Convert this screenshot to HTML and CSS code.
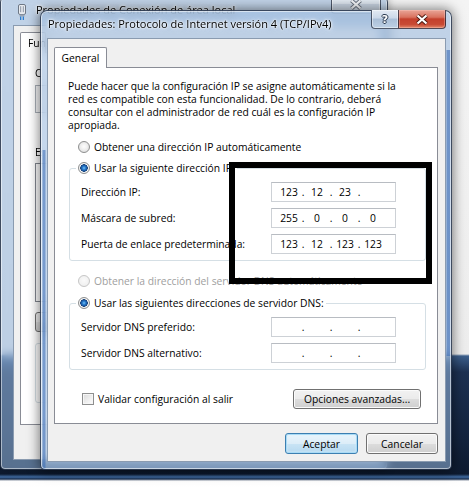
FILE: index.html
```html
<!DOCTYPE html>
<html lang="es">
<head>
<meta charset="utf-8">
<title>Propiedades: Protocolo de Internet versión 4 (TCP/IPv4)</title>
<link rel="stylesheet" href="styles.css">
</head>
<body>
<div class="desktop">

  <div class="win win-back">
    <div class="titlebar">
      <svg class="app-icon" width="10" height="16" viewBox="0 0 10 16">
        <rect x="1.5" y="0.5" width="7" height="10" rx="1.5" fill="#e9ecf0" stroke="#6d7785"/>
        <rect x="3.2" y="2.2" width="1" height="6" fill="#8a95a5"/>
        <rect x="5.8" y="2.2" width="1" height="6" fill="#8a95a5"/>
        <rect x="2.5" y="10.5" width="5" height="2" fill="#9aa5b5"/>
        <rect x="3" y="12.5" width="1.3" height="3.5" fill="#2d7fd0"/>
        <rect x="5.7" y="12.5" width="1.3" height="3.5" fill="#2d7fd0"/>
      </svg>
      <span class="title">Propiedades de Conexión de área local</span>
      <div class="caption">
        <div class="cap-btn cap-close-inactive">
          <svg width="14" height="11" viewBox="0 0 14 11"><path d="M2.5 1.5 L11.5 9.5 M11.5 1.5 L2.5 9.5" stroke="#6b7380" stroke-width="4"/><path d="M2.5 1.5 L11.5 9.5 M11.5 1.5 L2.5 9.5" stroke="#f4f6f9" stroke-width="2.2"/></svg>
        </div>
      </div>
    </div>
    <div class="client back-client">
      <div class="tabs"><div class="tab">Funciones de red</div></div>
      <div class="panel back-panel">
        <div class="bp-label">Conectar con:</div>
        <div class="bp-adapter"></div>
        <div class="bp-label bp-gap">Esta conexión usa los siguientes elementos:</div>
        <div class="bp-list"></div>
        <div class="bp-buttons"><div class="bp-btn"></div></div>
        <div class="bp-desc"></div>
      </div>
    </div>
  </div>

  <div class="win win-front">
    <div class="titlebar">
      <span class="title">Propiedades: Protocolo de Internet versión 4 (TCP/IPv4)</span>
      <div class="caption">
        <div class="cap-btn cap-help"><span class="help-glyph">?</span></div>
        <div class="cap-btn cap-close">
          <svg width="14" height="11" viewBox="0 0 14 11"><path d="M2.5 1.5 L11.5 9.5 M11.5 1.5 L2.5 9.5" stroke="#4a1810" stroke-width="4"/><path d="M2.5 1.5 L11.5 9.5 M11.5 1.5 L2.5 9.5" stroke="#ffffff" stroke-width="2.2"/></svg>
        </div>
      </div>
    </div>
    <div class="client">
      <div class="tabs"><div class="tab tab-active">General</div></div>
      <div class="panel">
        <p class="intro">Puede hacer que la configuración IP se asigne automáticamente si la<br>red es compatible con esta funcionalidad. De lo contrario, deberá<br>consultar con el administrador de red cuál es la configuración IP<br>apropiada.</p>

        <div class="opt opt-first"><span class="rb"></span><span>Obtener una dirección IP automáticamente</span></div>

        <fieldset class="group">
          <legend><span class="opt-in"><span class="rb checked"></span><span>Usar la siguiente dirección IP:</span></span></legend>
          <div class="rows">
            <div class="field-row"><span>Dirección IP:</span>
              <div class="ip"><span class="seg">123</span><span class="dot">.</span><span class="seg">12</span><span class="dot">.</span><span class="seg">23</span><span class="dot">.</span><span class="seg"></span></div></div>
            <div class="field-row"><span>Máscara de subred:</span>
              <div class="ip"><span class="seg">255</span><span class="dot">.</span><span class="seg">0</span><span class="dot">.</span><span class="seg">0</span><span class="dot">.</span><span class="seg">0</span></div></div>
            <div class="field-row"><span>Puerta de enlace predeterminada:</span>
              <div class="ip"><span class="seg">123</span><span class="dot">.</span><span class="seg">12</span><span class="dot">.</span><span class="seg">123</span><span class="dot">.</span><span class="seg">123</span></div></div>
          </div>
        </fieldset>

        <div class="opt opt-disabled"><span class="rb disabled"></span><span>Obtener la dirección del servidor DNS automáticamente</span></div>

        <fieldset class="group group-dns">
          <legend><span class="opt-in"><span class="rb checked"></span><span>Usar las siguientes direcciones de servidor DNS:</span></span></legend>
          <div class="rows">
            <div class="field-row"><span>Servidor DNS preferido:</span>
              <div class="ip ip-empty"><span class="seg"></span><span class="dot">.</span><span class="seg"></span><span class="dot">.</span><span class="seg"></span><span class="dot">.</span><span class="seg"></span></div></div>
            <div class="field-row"><span>Servidor DNS alternativo:</span>
              <div class="ip ip-empty"><span class="seg"></span><span class="dot">.</span><span class="seg"></span><span class="dot">.</span><span class="seg"></span><span class="dot">.</span><span class="seg"></span></div></div>
          </div>
        </fieldset>

        <div class="bottom-row">
          <label class="check"><span class="cb"></span><span>Validar configuración al salir</span></label>
          <button class="btn btn-adv">Opciones avanzadas...</button>
        </div>
      </div>
      <div class="dlg-buttons">
        <button class="btn btn-default btn-ok">Aceptar</button>
        <button class="btn btn-cancel">Cancelar</button>
      </div>
    </div>
  </div>

  <div class="annot"></div>
</div>
</body>
</html>
```
FILE: styles.css
```css
html, body {
  margin: 0;
  padding: 0;
}
body {
  width: 469px;
  height: 488px;
  overflow: hidden;
  font-family: "Open Sans", "Noto Sans", sans-serif;
  font-size: 10.3px;
  color: #000;
}
.desktop {
  position: relative;
  width: 469px;
  height: 488px;
  overflow: hidden;
  background: linear-gradient(180deg,
    #f4f4f4 0px, #ededed 354px,
    #3c5f8c 356px, #1d3152 372px, #13233d 440px, #0d1a2f 474px,
    #3f6aa0 477px, #1a3050 479px, #fdfdfd 481px, #ffffff 488px);
}

/* windows */
.win {
  position: absolute;
  box-sizing: border-box;
  display: flex;
  flex-direction: column;
  background: rgba(150, 182, 220, 0.55);
  -webkit-backdrop-filter: blur(5px);
  backdrop-filter: blur(5px);
  border: 1px solid rgba(20, 30, 50, 0.75);
  border-radius: 7px 7px 5px 5px;
}
.win-back {
  left: 0;
  top: -5px;
  width: 388px;
  height: 475px;
  padding: 0 6px 9px 12px;
  z-index: 1;
  box-shadow: 0 0 8px rgba(0, 0, 0, 0.3), inset 0 0 0 1px rgba(255, 255, 255, 0.5);
}
.win-front {
  left: 40px;
  top: 10px;
  width: 412px;
  height: 460px;
  padding: 0 5px 7px 6px;
  z-index: 2;
  background:
    linear-gradient(90deg, transparent 1px, rgba(55, 105, 180, 0.55) 2px, rgba(55, 105, 180, 0.55) 4px, transparent 5px) left 0 top 139px / 6px 320px no-repeat,
    linear-gradient(90deg, transparent 1px, rgba(55, 105, 180, 0.6) 2px, rgba(55, 105, 180, 0.6) 5px, transparent 6px) right 0 top 39px / 6px 306px no-repeat,
    rgba(150, 182, 220, 0.55);
  box-shadow: 0 0 12px 1px rgba(0, 0, 0, 0.5), inset 0 0 0 1px rgba(255, 255, 255, 0.55);
}

.titlebar {
  flex: none;
  display: flex;
  align-items: flex-start;
}
.win-front .titlebar { height: 27px; }
.win-back .titlebar { height: 29px; }

.title {
  white-space: nowrap;
  line-height: 14px;
  font-size: 11px;
  text-shadow: 0 0 6px #fff, 0 0 3px #fff, 0 0 2px #fff;
}
.win-front .title {
  margin-top: 6px;
  padding-left: 1px;
}
.win-back .title {
  margin-top: 7px;
  margin-left: 9px;
}
.app-icon {
  flex: none;
  margin-top: 8px;
  margin-left: 4px;
}

.caption {
  margin-left: auto;
  margin-top: -1px;
  display: flex;
  height: 19px;
  flex: none;
}
.cap-btn {
  box-sizing: border-box;
  height: 19px;
  display: flex;
  align-items: center;
  justify-content: center;
  border: 1px solid rgba(30, 40, 60, 0.75);
  border-top: none;
}
.cap-help {
  width: 27px;
  border-right: none;
  border-radius: 0 0 0 4px;
  background: linear-gradient(180deg, #e3eaf3 0%, #cbd8e8 45%, #aabfd7 50%, #bdd0e5 100%);
  box-shadow: inset 0 0 0 1px rgba(255, 255, 255, 0.45);
}
.help-glyph {
  font-family: "DejaVu Sans", sans-serif;
  font-weight: bold;
  font-size: 11px;
  line-height: 11px;
  color: #fff;
  text-shadow: 0 0 1px #2a3a50, 1px 0 0 #2a3a50, -1px 0 0 #2a3a50, 0 1px 0 #2a3a50, 0 -1px 0 #2a3a50;
}
.cap-close {
  width: 48px;
  border-radius: 0 0 4px 0;
  background: linear-gradient(180deg, #e9a597 0%, #d9725f 40%, #c4402c 50%, #c84a34 80%, #e3876a 100%);
  box-shadow: inset 0 0 0 1px rgba(255, 210, 200, 0.35);
}
.cap-close-inactive {
  width: 50px;
  border-radius: 0 0 4px 4px;
  background: linear-gradient(180deg, #eef2f7 0%, #d9e2ec 50%, #c7d3e1 51%, #d5e0ec 100%);
  box-shadow: inset 0 0 0 1px rgba(255, 255, 255, 0.5);
}

.client {
  flex: 1;
  min-height: 0;
  box-sizing: border-box;
  background: #f0f0f0;
  border: 1px solid #8a9bb0;
  display: flex;
  flex-direction: column;
  padding: 8px 7px 0 6px;
}
.back-client {
  padding: 6px 8px 0 6px;
}

/* tabs */
.tabs {
  display: flex;
  height: 20px;
  flex: none;
}
.tab {
  position: relative;
  z-index: 1;
  box-sizing: border-box;
  height: 21px;
  padding: 0 7px;
  display: flex;
  align-items: center;
  background: #fff;
  border: 1px solid #898c95;
  border-bottom: none;
  border-radius: 2px 2px 0 0;
  white-space: nowrap;
}
.back-client .tab {
  width: 26px;
  overflow: hidden;
}
.tab-active {
  width: 53px;
  justify-content: center;
  padding: 0;
}
.panel {
  box-sizing: border-box;
  height: 357px;
  flex: none;
  background: #fff;
  border: 1px solid #898c95;
  padding: 12px 11px 0 13px;
}

/* back window panel content (mostly hidden by the front window) */
.back-panel {
  height: 373px;
  padding: 13px 10px 0 14px;
}
.bp-label {
  line-height: 14px;
  white-space: nowrap;
  width: 7px;
  overflow: hidden;
}
.bp-gap { margin-top: 32px; }
.bp-adapter {
  margin-top: 5px;
  height: 28px;
  box-sizing: border-box;
  border: 1px solid #a9b0b8;
  background: #f5f6f7;
}
.bp-list {
  margin-top: 4px;
  height: 139px;
  box-sizing: border-box;
  border: 1px solid #828790;
  background: #fff;
}
.bp-buttons {
  margin-top: 10px;
  display: flex;
}
.bp-btn {
  width: 90px;
  height: 20px;
  box-sizing: border-box;
  border: 1px solid #707070;
  border-radius: 3px;
  background: linear-gradient(180deg, #f2f2f2 0%, #ebebeb 50%, #dddddd 51%, #cfcfcf 100%);
}
.bp-desc {
  margin-top: 11px;
  height: 60px;
  box-sizing: border-box;
  border: 1px solid #d5dfe5;
  border-radius: 3px;
}

/* front content */
.intro {
  margin: 0;
  line-height: 13px;
  white-space: nowrap;
}
.opt {
  display: flex;
  align-items: center;
  gap: 4px;
  height: 14px;
  margin-left: 10px;
  white-space: nowrap;
}
.opt-first { margin-top: 8px; }
.opt-disabled {
  margin-top: 13px;
  color: #a0a0a0;
}
.opt-in {
  display: inline-flex;
  align-items: center;
  gap: 4px;
  height: 14px;
  white-space: nowrap;
  vertical-align: top;
}

.rb {
  flex: none;
  width: 12px;
  height: 12px;
  box-sizing: border-box;
  border-radius: 50%;
  border: 1px solid #8e8f8f;
  background: radial-gradient(circle at 50% 45%, #fdfdfd 0, #f1f1f1 40%, #d4d4d4 100%);
}
.rb.checked {
  background: radial-gradient(circle at 50% 50%,
    #7cc4f3 0, #2b7fd0 1.6px, #17529a 3px, #0f3c74 3.5px,
    #ffffff 4px, #f0f0f0 4.8px, #d6d6d6 6px);
}
.rb.disabled {
  border-color: #c6c6c6;
  background: radial-gradient(circle at 50% 45%, #fafafa 0, #f2f2f2 60%, #e6e6e6 100%);
}

.group {
  margin: 7px 0 0 1px;
  padding: 0;
  border: 1px solid #d5dfe5;
  border-radius: 3px;
  min-width: 0;
}
.group legend {
  margin-left: 6px;
  padding: 0 2px;
  line-height: 14px;
  height: 14px;
}
.group-dns { margin-top: 8px; }
.rows {
  display: flex;
  flex-direction: column;
  gap: 6px;
  padding: 7px 29px 6px 11px;
}
.field-row {
  display: flex;
  align-items: center;
  justify-content: space-between;
  height: 20px;
  white-space: nowrap;
}
.ip {
  flex: none;
  display: flex;
  align-items: center;
  width: 125px;
  height: 20px;
  box-sizing: border-box;
  border: 1px solid #cdd1d6;
  border-top-color: #b8bcc2;
  background: #fff;
  padding-left: 6px;
}
.ip .seg {
  width: 22px;
  text-align: center;
}
.ip .dot {
  width: 6px;
  text-align: center;
}

.bottom-row {
  display: flex;
  align-items: center;
  justify-content: space-between;
  height: 20px;
  margin: 19px 5px 0 14px;
}
.check {
  display: flex;
  align-items: center;
  gap: 4px;
  white-space: nowrap;
}
.cb {
  flex: none;
  width: 12px;
  height: 12px;
  box-sizing: border-box;
  border: 1px solid #8e8f8f;
  background: linear-gradient(135deg, #d9d9d9 0%, #f0f0f0 60%, #fdfdfd 100%);
  box-shadow: inset 0 0 0 1px #f6f6f6;
}

/* buttons */
.btn {
  box-sizing: border-box;
  font-family: inherit;
  font-size: inherit;
  color: #000;
  padding: 0;
  border: 1px solid #707070;
  border-radius: 3px;
  background: linear-gradient(180deg, #f2f2f2 0%, #ebebeb 50%, #dddddd 51%, #cfcfcf 100%);
  box-shadow: inset 0 0 0 1px #fbfbfb;
  white-space: nowrap;
}
.btn-adv {
  width: 128px;
  height: 20px;
}
.dlg-buttons {
  flex: none;
  display: flex;
  justify-content: flex-end;
  gap: 8px;
  margin-top: 9px;
}
.btn-ok {
  width: 73px;
  height: 21px;
}
.btn-cancel {
  width: 72px;
  height: 21px;
}
.btn-default {
  border-color: #3c7fb1;
  background: linear-gradient(180deg, #eaf5fc 0%, #dcedf8 50%, #c9e4f5 51%, #b6d9f0 100%);
  box-shadow: inset 0 0 0 1px #a9dbf6, inset 0 0 2px 1px #d8eefb;
}

/* annotation drawn on the screenshot */
.annot {
  position: absolute;
  left: 229px;
  top: 162px;
  width: 203px;
  height: 122px;
  box-sizing: border-box;
  border: 6px solid #000;
  z-index: 5;
}
```
